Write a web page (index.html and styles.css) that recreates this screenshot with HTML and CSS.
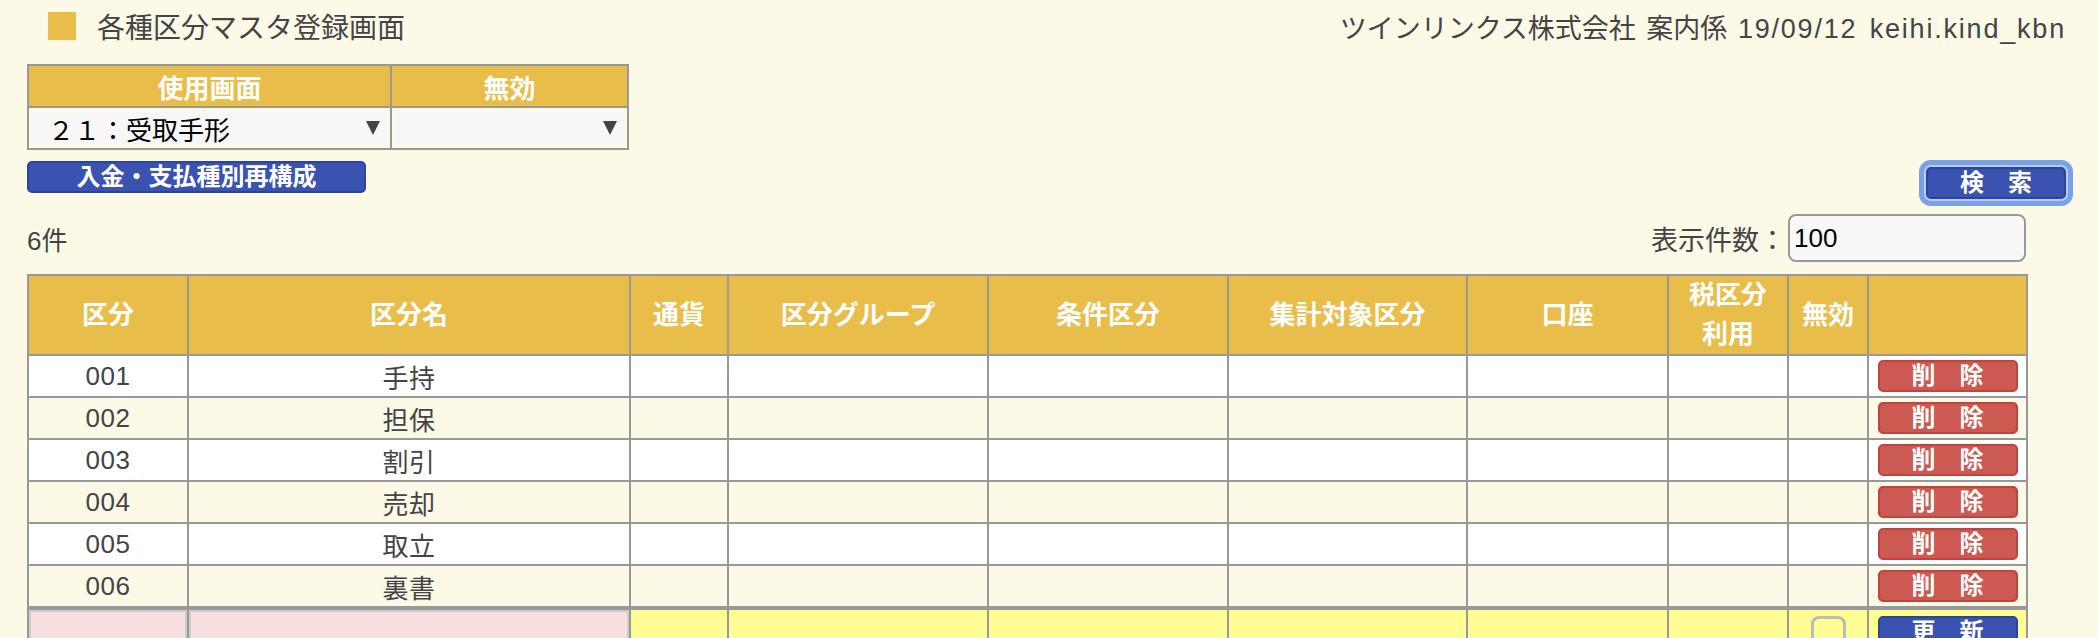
FILE: index.html
```html
<!DOCTYPE html>
<html lang="ja">

<head>
    <meta charset="UTF-8">
    <meta name="viewport" content="width=device-width, initial-scale=1.0">
    <title>各種区分マスタ登録画面</title>
    <link rel="stylesheet" href="styles.css">
</head>

<body>
    <div class="page">
        <div class="header">
            <h1 class="title"><span class="title-mark"></span>各種区分マスタ登録画面</h1>
            <div class="user-info">ツインリンクス株式会社 案内係 <span class="user-id">19/09/12 keihi.kind_kbn</span></div>
        </div>

        <table class="filter">
            <tr>
                <th class="col-screen">使用画面</th>
                <th>無効</th>
            </tr>
            <tr>
                <td><div class="select">２１：受取手形</div></td>
                <td><div class="select"></div></td>
            </tr>
        </table>

        <div class="actions">
            <button type="button" class="btn btn-blue btn-rebuild">入金・支払種別再構成</button>
            <button type="button" class="btn btn-blue btn-search">検　索</button>
        </div>

        <div class="list-info">
            <span class="count">6件</span>
            <label class="limit">表示件数：<input type="text" value="100"></label>
        </div>

        <table class="grid">
            <colgroup>
                <col class="w-code">
                <col class="w-name">
                <col class="w-currency">
                <col class="w-group">
                <col class="w-cond">
                <col class="w-total">
                <col class="w-account">
                <col class="w-tax">
                <col class="w-invalid">
                <col class="w-action">
            </colgroup>
            <tr>
                <th>区分</th>
                <th>区分名</th>
                <th>通貨</th>
                <th>区分グループ</th>
                <th>条件区分</th>
                <th>集計対象区分</th>
                <th>口座</th>
                <th>税区分<br>利用</th>
                <th>無効</th>
                <th></th>
            </tr>
            <tr>
                <td>001</td><td>手持</td><td></td><td></td><td></td><td></td><td></td><td></td><td></td>
                <td><button type="button" class="btn btn-red">削　除</button></td>
            </tr>
            <tr class="alt">
                <td>002</td><td>担保</td><td></td><td></td><td></td><td></td><td></td><td></td><td></td>
                <td><button type="button" class="btn btn-red">削　除</button></td>
            </tr>
            <tr>
                <td>003</td><td>割引</td><td></td><td></td><td></td><td></td><td></td><td></td><td></td>
                <td><button type="button" class="btn btn-red">削　除</button></td>
            </tr>
            <tr class="alt">
                <td>004</td><td>売却</td><td></td><td></td><td></td><td></td><td></td><td></td><td></td>
                <td><button type="button" class="btn btn-red">削　除</button></td>
            </tr>
            <tr>
                <td>005</td><td>取立</td><td></td><td></td><td></td><td></td><td></td><td></td><td></td>
                <td><button type="button" class="btn btn-red">削　除</button></td>
            </tr>
            <tr class="alt">
                <td>006</td><td>裏書</td><td></td><td></td><td></td><td></td><td></td><td></td><td></td>
                <td><button type="button" class="btn btn-red">削　除</button></td>
            </tr>
            <tr class="new-row">
                <td><input type="text" class="pink-input"></td>
                <td><input type="text" class="pink-input"></td>
                <td></td><td></td><td></td><td></td><td></td><td></td>
                <td><input type="checkbox" class="check"></td>
                <td><button type="button" class="btn btn-blue btn-row">更　新</button></td>
            </tr>
        </table>
    </div>
</body>

</html>
```

FILE: styles.css
```css
body {
    margin: 0;
    background-color: #fdf9e7;
    font-family: "Liberation Sans", "Noto Sans CJK JP", sans-serif;
    color: #444;
}

.page {
    padding: 12px 32px 0 27px;
}

.header {
    display: flex;
    justify-content: space-between;
    align-items: center;
    height: 28px;
}

.title {
    display: flex;
    align-items: center;
    gap: 21px;
    margin: 0 0 0 21px;
    font-size: 28px;
    font-weight: normal;
}

.title-mark {
    width: 28px;
    height: 28px;
    background-color: #e8bd4a;
}

.user-info {
    font-size: 27px;
    word-spacing: 3px;
}

.user-info .user-id {
    letter-spacing: 1.8px;
}

/* filter */
.filter {
    margin-top: 24px;
    width: 602px;
    border-collapse: collapse;
    table-layout: fixed;
}

.filter th {
    height: 40px;
    padding: 0;
    border: 2px solid #999;
    background-color: #e8bd4a;
    color: #fff;
    font-size: 26px;
}

.filter .col-screen {
    width: 361px;
}

.filter td {
    height: 34px;
    padding: 3px 4px 3px 3px;
    border: 2px solid #999;
}

.select {
    display: flex;
    align-items: center;
    height: 32px;
    padding: 0 6px 0 16px;
    background-color: #f7f7f7;
    color: #000;
    font-size: 26px;
}

.select::after {
    content: "";
    margin-left: auto;
    border-left: 7px solid transparent;
    border-right: 7px solid transparent;
    border-top: 14px solid #444;
}

/* buttons */
.btn {
    height: 32px;
    padding: 0;
    border-radius: 5px;
    color: #fff;
    font-family: inherit;
    font-size: 24px;
    font-weight: bold;
    line-height: 28px;
    cursor: pointer;
}

.btn-blue {
    background-color: #3a52b0;
    border: 2px solid #2d43a0;
}

.btn-red {
    width: 140px;
    background-color: #cc5a52;
    border: 2px solid #c0443d;
}

.actions {
    display: flex;
    justify-content: space-between;
    align-items: flex-start;
    margin-top: 11px;
}

.btn-rebuild {
    width: 339px;
}

.btn-search {
    width: 140px;
    margin-top: 6px;
    box-shadow: 0 0 0 2px #b7cdf3, 0 0 0 7px #78a1e8;
}

.list-info {
    display: flex;
    justify-content: space-between;
    align-items: center;
    width: 1999px;
    margin-top: 15px;
    font-size: 26px;
}

.limit {
    display: flex;
    align-items: center;
    gap: 2px;
    font-size: 27px;
}

.limit input {
    width: 238px;
    height: 48px;
    box-sizing: border-box;
    padding: 0 4px;
    border: 2px solid #999;
    border-radius: 8px;
    background-color: #f8f8f8;
    color: #000;
    font-family: inherit;
    font-size: 26px;
}

/* list table */
.grid {
    width: 1999px;
    margin-top: 12px;
    border-collapse: collapse;
    table-layout: fixed;
    font-size: 26px;
}

.w-code { width: 160px; }
.w-name { width: 442px; }
.w-currency { width: 98px; }
.w-group { width: 260px; }
.w-cond { width: 240px; }
.w-total { width: 239px; }
.w-account { width: 201px; }
.w-tax { width: 120px; }
.w-invalid { width: 80px; }
.w-action { width: 159px; }

.grid th {
    height: 78px;
    padding: 0;
    border: 2px solid #999;
    background-color: #e8bd4a;
    color: #fff;
    line-height: 39px;
}

.grid td {
    height: 40px;
    padding: 0;
    border: 2px solid #999;
    background-color: #fff;
    text-align: center;
    letter-spacing: 0.5px;
}

.grid tr.alt td {
    background-color: #fcf9e7;
}

.grid tr.new-row td {
    height: 50px;
    border-top: 4px solid #999;
    background-color: #fffc93;
    vertical-align: top;
}

.pink-input {
    display: block;
    width: 100%;
    height: 48px;
    box-sizing: border-box;
    margin: 0;
    border: 2px solid #ccc;
    background-color: #f8e0e0;
}

.check {
    appearance: none;
    width: 35px;
    height: 40px;
    margin: 6px 0 0;
    border: 3px solid #bbb;
    border-radius: 8px;
    background: transparent;
}

.btn-row {
    width: 140px;
    margin-top: 6px;
}
```
